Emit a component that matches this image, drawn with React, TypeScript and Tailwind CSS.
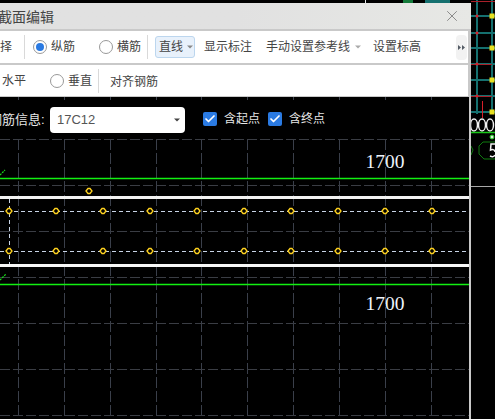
import React from 'react';
import { Check, X } from 'lucide-react';

const gridX = [18.5, 64.5, 110.5, 156.5, 201.5, 247.5, 293.5, 339.5, 385.5, 431.5];
const gridY = [139.5, 185.5, 231.5, 277.5, 323.5, 369.5, 415.5];
const rebarX = [9, 56, 103, 150, 197, 244, 291, 338, 385, 432];

const Caret = ({ className }: { className: string }) => (
  <svg width="6" height="4" viewBox="0 0 6 4" className={className}>
    <path d="M0 0.5H6L3 3.5Z" fill="currentColor" />
  </svg>
);

const Radio = ({ checked, className }: { checked?: boolean; className?: string }) => (
  <span className={`flex h-[14px] w-[14px] shrink-0 items-center justify-center rounded-full border border-[#999] bg-white ${className ?? ''}`}>
    {checked && <span className="h-[8px] w-[8px] rounded-full bg-[#2a7ae2]" />}
  </span>
);

const CheckBox = ({ className }: { className?: string }) => (
  <span className={`mb-[2px] flex h-[14px] w-[14px] shrink-0 items-center justify-center rounded-[2px] bg-[#2a7ae2] ${className ?? ''}`}>
    <Check size={12} strokeWidth={3.5} className="text-white" />
  </span>
);

const Divider = ({ className }: { className: string }) => (
  <span className={`h-[24px] w-px shrink-0 bg-[#d9d9d9] ${className}`} />
);

const Diamond = ({ x, y }: { x: number; y: number }) => (
  <path d={`M${x - 3} ${y}L${x - 1} ${y - 2.5}H${x + 1}L${x + 3} ${y}L${x + 1} ${y + 2.5}H${x - 1}Z`} fill="#000" stroke="#ffd21f" strokeWidth="1.3" />
);

const Canvas = () => (
  <svg className="absolute inset-0 h-full w-full" viewBox="0 97 469 322">
    {gridX.map((x) => (
      <line key={x} x1={x} x2={x} y1="97" y2="419" stroke="#3a3f4a" strokeWidth="1" strokeDasharray="11 3" />
    ))}
    {gridY.map((y) => (
      <line key={y} x1="0" x2="469" y1={y} y2={y} stroke="#3a3d44" strokeWidth="1" strokeDasharray="10 3" />
    ))}
    <line x1="0" x2="469" y1="178.5" y2="178.5" stroke="#12f012" strokeWidth="1.5" />
    <line x1="0" x2="469" y1="284.5" y2="284.5" stroke="#12f012" strokeWidth="1.5" />
    <path d="M0 175L5 170M0 280L6 274" stroke="#19e019" strokeWidth="1.2" strokeDasharray="2 1" />
    <rect x="0" y="196" width="469" height="3" fill="#f2f2f2" />
    <rect x="0" y="264" width="469" height="3" fill="#f7f7f7" />
    <g stroke="#c8d4e6" strokeWidth="1" strokeDasharray="4 3">
      <line x1="0" x2="469" y1="211.5" y2="211.5" />
      <line x1="0" x2="469" y1="251.5" y2="251.5" />
      <line x1="9.5" x2="9.5" y1="199" y2="264" />
    </g>
    {rebarX.map((x) => (
      <g key={x}>
        <Diamond x={x} y={211} />
        <Diamond x={x} y={251} />
      </g>
    ))}
    <Diamond x={89} y={191} />
    <g fill="#eef4fb" fontSize="19.5" fontFamily="'Liberation Serif', serif">
      <text x="365.5" y="167.5">1700</text>
      <text x="365.5" y="309.5">1700</text>
    </g>
  </svg>
);

// the model behind the dialog, only a strip of it shows on the right
const Backdrop = () => (
  <svg className="h-[419px] w-[24px] shrink-0" viewBox="471 0 24 419">
    <rect x="471" y="0" width="24" height="419" fill="#000" />
    <g stroke="#15706f" strokeWidth="2">
      <line x1="477" x2="477" y1="0" y2="114" />
      <line x1="492" x2="492" y1="0" y2="114" />
      {[16, 33, 48, 64, 80, 96, 112].map((y) => (
        <line key={y} x1="471" x2="495" y1={y} y2={y} />
      ))}
    </g>
    <g stroke="#a8202a" strokeWidth="1">
      <line x1="471" x2="495" y1="1.5" y2="1.5" />
      <line x1="471" x2="492" y1="64.5" y2="64.5" />
      <line x1="471" x2="492" y1="96.5" y2="96.5" />
      <line x1="482.5" x2="482.5" y1="101" y2="118" stroke="#d8202a" />
    </g>
    {[16, 33, 64, 96].map((y) => (
      <circle key={y} cx="477" cy={y} r="1.5" fill="#d8202a" />
    ))}
    {[16, 48, 80, 112].map((y) => (
      <rect key={y} x="489.5" y={y - 2.5} width="5" height="5" fill="#e8e020" />
    ))}
    <g fill="none" stroke="#f2f2f2" strokeWidth="1.5">
      <ellipse cx="474" cy="125" rx="3.5" ry="6" />
      <ellipse cx="482" cy="125" rx="3.5" ry="6" />
      <ellipse cx="490" cy="125" rx="3.5" ry="6" />
    </g>
    <line x1="471" x2="495" y1="132.5" y2="132.5" stroke="#19c819" strokeWidth="1.5" />
    <circle cx="492" cy="137" r="2" fill="#d8f0d8" stroke="#19c819" />
    <path d="M479 146L483 142H498V158L494 159H484L479 154Z" fill="none" stroke="#0f7a0f" />
    <path d="M471 146L473 150L471 155" fill="none" stroke="#0f7a0f" />
    <path d="M495 144H491L490.5 150C493 149 495 150 495 152M495 155C494 157 492 157 490 156" fill="none" stroke="#f2f2f2" strokeWidth="1.5" />
    <line x1="471" x2="495" y1="186.5" y2="186.5" stroke="#a8a8a8" />
  </svg>
);

export default function App() {
  return (
    <div className="flex h-[419px] w-[495px] overflow-hidden bg-black font-['Liberation_Sans','Noto_Sans_CJK_SC',sans-serif] text-[12px] text-[#444]">
      <div className="flex h-full w-[471px] shrink-0 flex-col overflow-hidden bg-[#c9c9c9]">
        <div className="flex h-[3px] shrink-0 bg-black">
          <span className="ml-[365px] w-px bg-[#e8e8e8]" />
          <span className="ml-[37px] w-[10px] bg-[#137a3a]" />
          <span className="ml-[12px] w-[25px] bg-[#15706f]" />
        </div>
        <div className="flex h-[26px] shrink-0 items-center justify-between bg-linear-to-r from-[#e1e1e1] via-[#e1e1e1] to-[#e7e8e5] pr-[10px]">
          <span className="mt-[2px] -ml-[2px] text-[14px] text-[#444]">截面编辑</span>
          <X size={18} strokeWidth={1.1} className="text-[#777]" />
        </div>

        <div className="mt-[2px] mr-[3px] flex h-[32px] shrink-0 items-center overflow-hidden bg-white">
          <span>择</span>
          <Divider className="ml-[12px]" />
          <Radio checked className="ml-[8px]" />
          <span className="ml-[4px]">纵筋</span>
          <Radio className="ml-[24px]" />
          <span className="ml-[4px]">横筋</span>
          <Divider className="ml-[6px]" />
          <span className="ml-[7px] flex h-[22px] w-[40px] shrink-0 items-center rounded-[3px] border border-[#bcd6ee] bg-[#e8f1fb] pl-[3px]">
            直线
            <Caret className="ml-[4px] text-[#888]" />
          </span>
          <span className="ml-[9px]">显示标注</span>
          <span className="ml-[14px]">手动设置参考线</span>
          <Caret className="ml-[5px] text-[#aaa]" />
          <span className="ml-[12px]">设置标高</span>
          <span className="ml-[35px] flex h-[25px] w-[11px] shrink-0 items-center justify-center rounded-[4px] bg-[#f2f2f2]">
            <svg width="7" height="5" viewBox="0 0 7 5">
              <path d="M0 0L3 2.5L0 5ZM4 0L7 2.5L4 5Z" fill="#555c66" />
            </svg>
          </span>
        </div>

        <div className="mt-[2px] mr-[3px] flex h-[31px] shrink-0 items-center bg-white">
          <span className="ml-[2px]">水平</span>
          <Radio className="ml-[24px]" />
          <span className="ml-[4px]">垂直</span>
          <Divider className="ml-[6px]" />
          <span className="ml-[11px] mt-[3px]">对齐钢筋</span>
        </div>

        <div className="relative mt-px mr-[2px] min-h-0 flex-1 bg-black">
          <Canvas />
          <div className="relative mt-[3px] flex h-[39px] items-center overflow-hidden bg-black pt-px text-[#e6e6e6]">
            <span className="-ml-[11px] w-[55px] shrink-0 text-[13px] whitespace-nowrap">钢筋信息:</span>
            <span className="ml-[6px] flex h-[26px] w-[135px] shrink-0 items-center rounded-[4px] bg-white pl-[7px] text-[13px] text-[#555]">
              17C12
              <Caret className="ml-[79px] text-[#444]" />
            </span>
            <CheckBox className="ml-[18px]" />
            <span className="mb-[2px] ml-[7px]">含起点</span>
            <CheckBox className="ml-[8px]" />
            <span className="mb-[2px] ml-[7px]">含终点</span>
          </div>
        </div>
      </div>
      <Backdrop />
    </div>
  );
}
